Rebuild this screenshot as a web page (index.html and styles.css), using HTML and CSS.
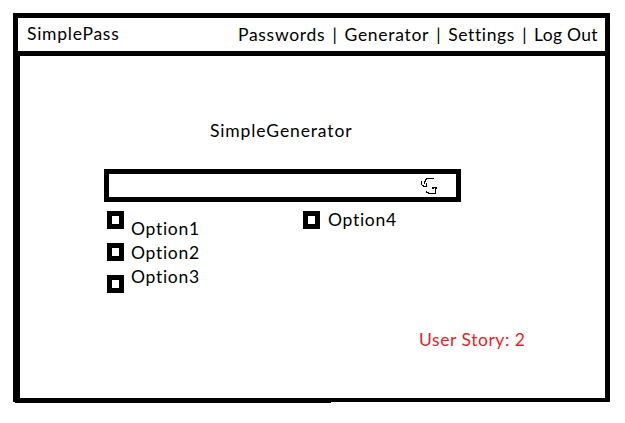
FILE: index.html
```
<!DOCTYPE html>
<html lang="en">
<head>
<meta charset="utf-8">
<title>SimplePass</title>
<link rel="stylesheet" href="styles.css">
</head>
<body>
<div class="window">
  <header class="header">
    <div class="brand">SimplePass</div>
    <nav class="nav"><span class="wide">Passwords</span><span>|</span><span class="wide">Generator</span><span>|</span><span class="mid">Settings</span><span>|</span><span>Log Out</span></nav>
  </header>
  <main class="main">
    <h1 class="title">SimpleGenerator</h1>
    <div class="field">
      <svg class="refresh" width="18" height="18" viewBox="0 0 18 18" shape-rendering="crispEdges" fill="none" stroke="#000">
        <path d="M6 1.500H14M6.500 1V3M5.500 2V5M4.500 4V7M1.500 4V8M2 8.500H4M3 9.500H7M6.500 6V10"/>
        <path d="M12 10.500H17M12 11.500H14M16.500 10V12M15.500 11V17M8 16.500H16M6 15.500H9M6.500 14V16"/>
      </svg>
    </div>
    <div class="options">
      <div class="boxes"><i class="box"></i><i class="box"></i><i class="box"></i></div>
      <div class="labels"><span>Option1</span><span>Option2</span><span>Option3</span></div>
      <div class="extra"><i class="box"></i><span>Option4</span></div>
    </div>
    <p class="story">User Story: 2</p>
  </main>
  <div class="base"></div>
</div>
</body>
</html>
```
FILE: styles.css
```
* { box-sizing: border-box; }
body {
  margin: 0;
  padding: 13px 15px 0 13px;
  background: #fff;
  color: #000;
  font: 17.5px/24px Lato, "Liberation Sans", sans-serif;
}
.window { width: 597px; }
.header {
  display: flex;
  justify-content: space-between;
  height: 43px;
  border: 5px solid #000;
  padding: 4px 7px 0 9px;
  white-space: nowrap;
}
.brand { letter-spacing: .75px; }
.nav {
  display: flex;
  justify-content: space-between;
  width: 360px;
  margin-top: 1px;
  letter-spacing: .3px;
}
.wide { letter-spacing: .7px; }
.mid { letter-spacing: .6px; }
.main {
  height: 342px;
  border: solid #000;
  border-width: 0 5px 0 7px;
  padding: 63px 0 0 84px;
}
.title {
  margin: 0 0 26px 106px;
  font: inherit;
  letter-spacing: .87px;
}
.field {
  display: flex;
  justify-content: flex-end;
  width: 357px;
  height: 33px;
  border: 5px solid #000;
  padding: 3px 18px 0 0;
}
.options {
  display: flex;
  height: 91px;
  padding: 9px 0 0 3px;
}
.boxes {
  display: flex;
  flex-direction: column;
  gap: 14px;
}
.box {
  display: block;
  width: 17px;
  height: 18px;
  border: 5px solid #000;
}
.labels {
  display: flex;
  flex-direction: column;
  width: 172px;
  margin: 6px 0 0 7px;
  letter-spacing: .7px;
}
.extra {
  display: flex;
  gap: 8px;
  letter-spacing: .7px;
}
.extra span { margin-top: -3px; }
.story {
  margin: 35px 0 0 315px;
  color: #ed1c24;
  letter-spacing: .55px;
}
.base {
  height: 5px;
  background:
    linear-gradient(#000, #000) 2px 0 / 316px 5px no-repeat,
    linear-gradient(#000, #000) 0 0 / 597px 4px no-repeat;
}
```
